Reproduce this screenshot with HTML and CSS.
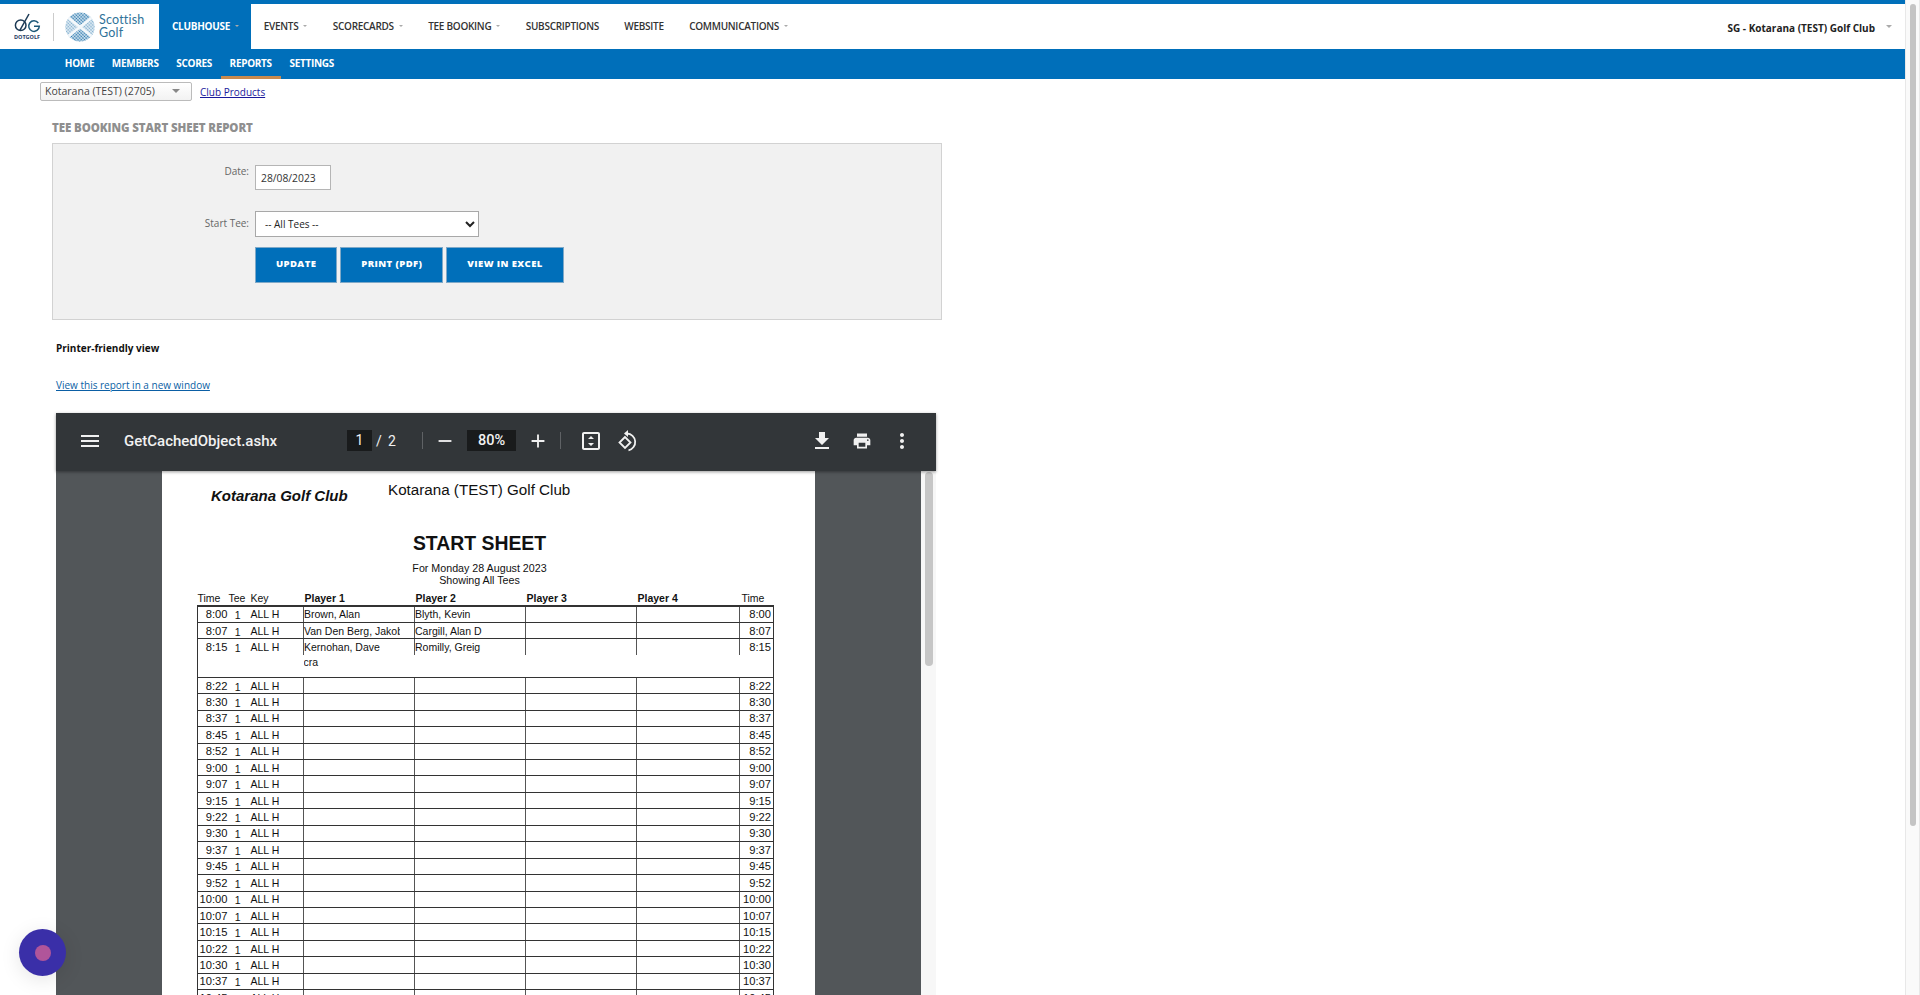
FILE: index.html
```html
<!DOCTYPE html>
<html lang="en">
<head>
    <meta charset="UTF-8">
    <title>Tee Booking Start Sheet Report</title>
    <link rel="stylesheet" href="styles.css">
</head>
<body>
<div class="window">
<div class="page">
    <!-- Main navigation -->
    <header class="topnav">
        <a class="logos" href="#">
            <span class="dotgolf">
                <svg width="28" height="22" viewBox="0 0 28 22" fill="none">
                    <circle cx="7.7" cy="13.3" r="5.3" stroke="#1c3a55" stroke-width="1.5"/>
                    <path d="M6.7 18.7 16 2" stroke="#1c3a55" stroke-width="1.5"/>
                    <path d="M25.3 11a5.3 5.3 0 1 0 1 3.3H21" stroke="#1c5878" stroke-width="1.5"/>
                </svg>
                <b>DOTGOLF</b>
            </span>
            <span class="logo-sep"></span>
            <svg class="globe" width="30" height="30" viewBox="0 0 30 30">
                <defs>
                    <pattern id="dots" width="2.3" height="2.3" patternUnits="userSpaceOnUse" patternTransform="rotate(45)">
                        <circle cx="1.15" cy="1.15" r="0.85" fill="#2273ab"/>
                    </pattern>
                    <clipPath id="ball"><circle cx="15" cy="15" r="14.5"/></clipPath>
                </defs>
                <g clip-path="url(#ball)">
                    <rect width="30" height="30" fill="#d5e4ef"/>
                    <rect width="30" height="30" fill="url(#dots)"/>
                    <path d="M0 0 15 15 0 30zM30 0 15 15 30 30z" fill="#fff" opacity="0.4"/>
                    <path d="M0 3 30 27M30 3 0 27" stroke="#f4f8fb" stroke-width="2.8"/>
                </g>
            </svg>
            <span class="scottish">Scottish<br>Golf</span>
        </a>
        <nav class="mainmenu">
            <a class="active caret" href="#">Clubhouse</a>
            <a class="caret" href="#">Events</a>
            <a class="caret" href="#">Scorecards</a>
            <a class="caret" href="#">Tee Booking</a>
            <a href="#">Subscriptions</a>
            <a href="#">Website</a>
            <a class="caret" href="#">Communications</a>
        </nav>
        <div class="clubname">SG - Kotarana (TEST) Golf Club</div>
    </header>

    <nav class="subnav">
        <a href="#">Home</a>
        <a href="#">Members</a>
        <a href="#">Scores</a>
        <a class="current" href="#">Reports</a>
        <a href="#">Settings</a>
    </nav>

    <div class="clubbar">
        <div class="clubselect">Kotarana (TEST) (2705)</div>
        <a href="#">Club Products</a>
    </div>

    <h1 class="report-title">Tee Booking Start Sheet Report</h1>

    <!-- Report filter -->
    <form class="filter">
        <label class="first" for="date">Date:</label>
        <input id="date" class="datebox" type="text" value="28/08/2023">
        <label for="tee">Start Tee:</label>
        <select id="tee" class="teebox"><option>-- All Tees --</option></select>
        <div class="buttons">
            <button type="button">Update</button>
            <button type="button">Print (PDF)</button>
            <button type="button">View in Excel</button>
        </div>
    </form>

    <p class="printer">Printer-friendly view</p>
    <a class="newwindow" href="#">View this report in a new window</a>

    <!-- PDF viewer -->
    <div class="viewer">
        <div class="pdfbar">
            <svg class="ico menu" viewBox="0 0 24 24"><path d="M3 18h18v-2H3v2zm0-5h18v-2H3v2zm0-7v2h18V6H3z"/></svg>
            <span class="pdfname">GetCachedObject.ashx</span>
            <span class="pagebox">1</span>
            <span class="pageof">/</span>
            <span class="pagetotal">2</span>
            <span class="pdfsep sep1"></span>
            <svg class="ico minus" viewBox="0 0 24 24"><path d="M19 13H5v-2h14v2z"/></svg>
            <span class="zoombox">80%</span>
            <svg class="ico plus" viewBox="0 0 24 24"><path d="M19 13h-6v6h-2v-6H5v-2h6V5h2v6h6v2z"/></svg>
            <span class="pdfsep sep2"></span>
            <svg class="ico fit" viewBox="0 0 24 24"><path d="M19 3H5c-1.1 0-2 .9-2 2v14c0 1.1.9 2 2 2h14c1.1 0 2-.9 2-2V5c0-1.1-.9-2-2-2zm0 16H5V5h14v14z"/><path d="M12 7l3 3H9zM12 17l-3-3h6z"/></svg>
            <svg class="ico rotate" viewBox="0 0 24 24"><path d="M10 8l-5.5 5.5L10 19l5.5-5.5z" stroke="#f1f1f1" stroke-width="1.8"/><path d="M12 4.5a8.5 8.5 0 0 1 1.5 16.8" stroke="#f1f1f1" stroke-width="1.8"/><path class="rot-head" d="M13 1 9 4.5 13 8z"/></svg>
            <svg class="ico download" viewBox="0 0 24 24"><path d="M19 9h-4V3H9v6H5l7 7 7-7zM5 18v2h14v-2H5z"/></svg>
            <svg class="ico print" viewBox="0 0 24 24"><path d="M19 8H5c-1.66 0-3 1.34-3 3v6h4v4h12v-4h4v-6c0-1.66-1.34-3-3-3zm-3 11H8v-5h8v5zm3-7c-.55 0-1-.45-1-1s.45-1 1-1 1 .45 1 1-.45 1-1 1zm-1-9H6v4h12V3z"/></svg>
            <svg class="ico more" viewBox="0 0 24 24"><path d="M12 8c1.1 0 2-.9 2-2s-.9-2-2-2-2 .9-2 2 .9 2 2 2zm0 2c-1.1 0-2 .9-2 2s.9 2 2 2 2-.9 2-2-.9-2-2-2zm0 6c-1.1 0-2 .9-2 2s.9 2 2 2 2-.9 2-2-.9-2-2-2z"/></svg>
        </div>
        <div class="pdfbody">
            <div class="pdfscroll">
                <div class="sheet">
                    <div class="sheet-head">
                        <span class="sheet-logo">Kotarana Golf Club</span>
                        <span class="sheet-club">Kotarana (TEST) Golf Club</span>
                    </div>
                    <h2 class="sheet-title">START SHEET</h2>
                    <p class="sheet-sub">For Monday 28 August 2023<br>Showing All Tees</p>
                    <table class="starts">
                        <colgroup>
                            <col class="c-time"><col class="c-tee"><col class="c-key">
                            <col class="c-p"><col class="c-p"><col class="c-p"><col class="c-p4"><col class="c-end">
                        </colgroup>
                        <thead>
                            <tr><th class="h-time">Time</th><th class="h-tee">Tee</th><th class="h-key">Key</th><th class="pl">Player 1</th><th class="pl">Player 2</th><th class="pl">Player 3</th><th class="pl">Player 4</th><th class="h-end">Time</th></tr>
                        </thead>
                        <tbody>
                            <tr><td>8:00</td><td class="t">1</td><td class="k">ALL H</td><td class="v">Brown, Alan</td><td class="v">Blyth, Kevin</td><td class="v"></td><td class="v"></td><td class="e">8:00</td></tr>
                            <tr><td>8:07</td><td class="t">1</td><td class="k">ALL H</td><td class="v"><span class="clip">Van Den Berg, Jakob</span></td><td class="v">Cargill, Alan D</td><td class="v"></td><td class="v"></td><td class="e">8:07</td></tr>
                            <tr class="nobottom"><td>8:15</td><td class="t">1</td><td class="k">ALL H</td><td class="v">Kernohan, Dave</td><td class="v">Romilly, Greig</td><td class="v"></td><td class="v"></td><td class="e">8:15</td></tr>
                            <tr class="extra"><td colspan="3"></td><td colspan="5">cra</td></tr>
                            <tr><td>8:22</td><td class="t">1</td><td class="k">ALL H</td><td class="v"></td><td class="v"></td><td class="v"></td><td class="v"></td><td class="e">8:22</td></tr>
                            <tr><td>8:30</td><td class="t">1</td><td class="k">ALL H</td><td class="v"></td><td class="v"></td><td class="v"></td><td class="v"></td><td class="e">8:30</td></tr>
                            <tr><td>8:37</td><td class="t">1</td><td class="k">ALL H</td><td class="v"></td><td class="v"></td><td class="v"></td><td class="v"></td><td class="e">8:37</td></tr>
                            <tr><td>8:45</td><td class="t">1</td><td class="k">ALL H</td><td class="v"></td><td class="v"></td><td class="v"></td><td class="v"></td><td class="e">8:45</td></tr>
                            <tr><td>8:52</td><td class="t">1</td><td class="k">ALL H</td><td class="v"></td><td class="v"></td><td class="v"></td><td class="v"></td><td class="e">8:52</td></tr>
                            <tr><td>9:00</td><td class="t">1</td><td class="k">ALL H</td><td class="v"></td><td class="v"></td><td class="v"></td><td class="v"></td><td class="e">9:00</td></tr>
                            <tr><td>9:07</td><td class="t">1</td><td class="k">ALL H</td><td class="v"></td><td class="v"></td><td class="v"></td><td class="v"></td><td class="e">9:07</td></tr>
                            <tr><td>9:15</td><td class="t">1</td><td class="k">ALL H</td><td class="v"></td><td class="v"></td><td class="v"></td><td class="v"></td><td class="e">9:15</td></tr>
                            <tr><td>9:22</td><td class="t">1</td><td class="k">ALL H</td><td class="v"></td><td class="v"></td><td class="v"></td><td class="v"></td><td class="e">9:22</td></tr>
                            <tr><td>9:30</td><td class="t">1</td><td class="k">ALL H</td><td class="v"></td><td class="v"></td><td class="v"></td><td class="v"></td><td class="e">9:30</td></tr>
                            <tr><td>9:37</td><td class="t">1</td><td class="k">ALL H</td><td class="v"></td><td class="v"></td><td class="v"></td><td class="v"></td><td class="e">9:37</td></tr>
                            <tr><td>9:45</td><td class="t">1</td><td class="k">ALL H</td><td class="v"></td><td class="v"></td><td class="v"></td><td class="v"></td><td class="e">9:45</td></tr>
                            <tr><td>9:52</td><td class="t">1</td><td class="k">ALL H</td><td class="v"></td><td class="v"></td><td class="v"></td><td class="v"></td><td class="e">9:52</td></tr>
                            <tr><td>10:00</td><td class="t">1</td><td class="k">ALL H</td><td class="v"></td><td class="v"></td><td class="v"></td><td class="v"></td><td class="e">10:00</td></tr>
                            <tr><td>10:07</td><td class="t">1</td><td class="k">ALL H</td><td class="v"></td><td class="v"></td><td class="v"></td><td class="v"></td><td class="e">10:07</td></tr>
                            <tr><td>10:15</td><td class="t">1</td><td class="k">ALL H</td><td class="v"></td><td class="v"></td><td class="v"></td><td class="v"></td><td class="e">10:15</td></tr>
                            <tr><td>10:22</td><td class="t">1</td><td class="k">ALL H</td><td class="v"></td><td class="v"></td><td class="v"></td><td class="v"></td><td class="e">10:22</td></tr>
                            <tr><td>10:30</td><td class="t">1</td><td class="k">ALL H</td><td class="v"></td><td class="v"></td><td class="v"></td><td class="v"></td><td class="e">10:30</td></tr>
                            <tr><td>10:37</td><td class="t">1</td><td class="k">ALL H</td><td class="v"></td><td class="v"></td><td class="v"></td><td class="v"></td><td class="e">10:37</td></tr>
                            <tr><td>10:45</td><td class="t">1</td><td class="k">ALL H</td><td class="v"></td><td class="v"></td><td class="v"></td><td class="v"></td><td class="e">10:45</td></tr>
                        </tbody>
                    </table>
                </div>
            </div>
            <div class="pdftrack"><div class="pdfthumb"></div></div>
        </div>
    </div>
</div>

<div class="scrollbar"><div class="thumb"></div></div>
</div>

<!-- Chat bubble -->
<div class="chat"><span></span></div>
</body>
</html>
```

FILE: styles.css
```css
/* Base */
* {
    box-sizing: border-box;
}

html, body {
    margin: 0;
    height: 100%;
    overflow: hidden;
}

body {
    font-family: "Open Sans", Arial, sans-serif;
    font-size: 11px;
    color: #333;
    background-color: #fff;
}

a {
    text-decoration: none;
}

.window {
    display: flex;
    height: 995px;
}

.page {
    width: 1905px;
    height: 995px;
    overflow: hidden;
}

/* Window scrollbar */
.scrollbar {
    width: 15px;
    padding: 4px 3px 0 4px;
    background-color: #fafafa;
    border-left: 1px solid #e8e8e8;
    border-right: 1px solid #e8e8e8;
}

.thumb {
    height: 822px;
    border-radius: 4px;
    background-color: #c4c4c4;
}

/* Main navigation */
.topnav {
    display: flex;
    height: 49px;
    border-top: 4px solid #006fba;
    background-color: #fff;
}

.logos {
    display: flex;
    align-items: center;
    width: 159px;
    padding-left: 14px;
}

.dotgolf {
    display: flex;
    flex-direction: column;
    align-items: center;
    width: 26px;
}

.dotgolf b {
    font-size: 5.5px;
    line-height: 7px;
    color: #1e3a5f;
}

.logo-sep {
    width: 1px;
    height: 28px;
    margin: 0 11px 0 13px;
    background-color: #ccc;
}

.scottish {
    margin-left: 4px;
    font-family: Lato, sans-serif;
    font-size: 12.5px;
    line-height: 12.5px;
    letter-spacing: 0.2px;
    color: #2f7299;
}

.mainmenu {
    display: flex;
}

.mainmenu a {
    display: flex;
    align-items: center;
    padding: 0 12.7px 1px;
    font-size: 10px;
    letter-spacing: -0.28px;
    font-weight: 600;
    text-transform: uppercase;
    color: #333;
}

.mainmenu a.caret::after {
    content: "";
    margin-left: 5px;
    border-left: 2px solid transparent;
    border-right: 2px solid transparent;
    border-top: 2px solid #aaa;
}

.mainmenu a.active {
    width: 92px;
    padding-left: 13px;
    color: #fff;
    font-weight: 700;
    background-color: #006fba;
}

.clubname {
    margin-left: auto;
    padding: 3px 30px 0 0;
    align-self: center;
    position: relative;
    font-size: 10px;
    font-weight: 700;
    color: #222;
}

.clubname::after {
    content: "";
    position: absolute;
    top: 7px;
    right: 13px;
    border-left: 3px solid transparent;
    border-right: 3px solid transparent;
    border-top: 3px solid #aaa;
}

.subnav {
    display: flex;
    height: 30px;
    padding-left: 56px;
    background-color: #006fba;
}

.subnav a {
    display: flex;
    align-items: center;
    padding: 0 8.8px;
    font-size: 10px;
    letter-spacing: -0.3px;
    font-weight: 700;
    text-transform: uppercase;
    color: #fff;
    border-bottom: 3px solid transparent;
}

.subnav a.current {
    border-bottom-color: #c98a4e;
}

/* Club selector */
.clubbar {
    display: flex;
    align-items: center;
    gap: 8px;
    margin: 3px 0 0 40px;
}

.clubselect {
    position: relative;
    width: 152px;
    height: 19px;
    padding-left: 4px;
    line-height: 16px;
    font-size: 10.5px;
    color: #444;
    border: 1px solid #bbb;
    border-radius: 2px;
    background: linear-gradient(#fff, #f2f2f2);
}

.clubselect::after {
    content: "";
    position: absolute;
    top: 6px;
    right: 11px;
    border-left: 4px solid transparent;
    border-right: 4px solid transparent;
    border-top: 4px solid #888;
}

.clubbar a {
    padding-top: 1px;
    font-size: 10px;
    color: #1a1a9c;
    text-decoration: underline;
}

/* Report */
.report-title {
    margin: 19px 0 0 52px;
    font-size: 11.5px;
    line-height: 16px;
    font-weight: 800;
    letter-spacing: -0.1px;
    text-transform: uppercase;
    color: #8f8f8f;
}

.filter {
    display: grid;
    grid-template-columns: 196px 1fr;
    grid-template-rows: 25px 26px 36px;
    column-gap: 6px;
    row-gap: 21px;
    width: 890px;
    height: 177px;
    margin: 7px 0 0 52px;
    padding-top: 21px;
    background-color: #f1f1f1;
    border: 1px solid #d2d2d2;
}

.filter label {
    padding-top: 5px;
    text-align: right;
    font-size: 10px;
    color: #666;
}

.filter label.first {
    padding-top: 0;
    margin-top: -1px;
}

.datebox {
    width: 76px;
    height: 25px;
    padding: 0 5px;
    font-family: inherit;
    font-size: 10.3px;
    color: #333;
    background-color: #fff;
    border: 1px solid #b5b5b5;
}

.teebox {
    width: 224px;
    height: 26px;
    padding-left: 5px;
    font-family: inherit;
    font-size: 10px;
    color: #222;
    background-color: #fff;
    border: 1px solid #a8a8a8;
}

.buttons {
    grid-column: 2;
    display: flex;
    gap: 3px;
    margin-top: -11px;
}

.buttons button {
    height: 36px;
    padding: 0 20px 3px;
    font-family: inherit;
    font-size: 9.5px;
    font-weight: 800;
    letter-spacing: 0.4px;
    text-transform: uppercase;
    color: #fff;
    background-color: #006fba;
    border: 1px solid #7fa9c8;
}

.printer {
    margin: 20px 0 0 56px;
    font-size: 10px;
    line-height: 16px;
    font-weight: 700;
    color: #111;
}

.newwindow {
    display: block;
    margin: 21px 0 0 56px;
    font-size: 10px;
    line-height: 16px;
    color: #0b5fa5;
    text-decoration: underline;
}

/* PDF viewer */
.viewer {
    width: 880px;
    margin: 20px 0 0 56px;
    background-color: #525659;
}

.pdfbar {
    position: relative;
    height: 58px;
    font-family: Roboto, Arial, sans-serif;
    color: #f1f1f1;
    background-color: #323639;
    box-shadow: 0 1px 3px rgba(0, 0, 0, 0.4);
}

/* toolbar controls sit at fixed places, like the real viewer */
.pdfbar > * {
    position: absolute;
}

.ico {
    top: 16px;
    width: 24px;
    height: 24px;
    fill: #f1f1f1;
}

.menu { left: 22px; }
.minus { left: 378px; top: 17px; width: 22px; height: 22px; }
.plus { left: 471px; top: 17px; width: 22px; height: 22px; }
.fit { left: 523px; }
.rotate { left: 559px; fill: none; }
.rot-head { fill: #f1f1f1; }
.download { left: 754px; }
.print { left: 796px; top: 18px; width: 20px; height: 20px; }
.more { left: 834px; }

.pdfname {
    top: 19px;
    left: 68px;
    font-size: 15px;
    line-height: 18px;
    font-weight: 500;
}

.pagebox {
    top: 17px;
    left: 291px;
    width: 25px;
    height: 21px;
    font-size: 14px;
    line-height: 21px;
    text-align: center;
    background-color: #191b1c;
}

.pageof {
    top: 18px;
    left: 320px;
    font-size: 14px;
    line-height: 21px;
}

.pagetotal {
    top: 18px;
    left: 332px;
    font-size: 14px;
    line-height: 21px;
}

.pdfsep {
    top: 19px;
    width: 1px;
    height: 17px;
    background-color: #5f6265;
}

.sep1 { left: 366px; }
.sep2 { left: 504px; }

.zoombox {
    top: 17px;
    left: 411px;
    width: 49px;
    height: 21px;
    font-size: 14.5px;
    font-weight: 500;
    line-height: 21px;
    text-align: center;
    background-color: #191b1c;
}

.pdfbody {
    display: flex;
    height: 524px;
}

.pdfscroll {
    width: 865px;
    padding-left: 106px;
    overflow: hidden;
}

.pdftrack {
    width: 15px;
    padding: 1px 3px 0 4px;
    background-color: #f7f7f7;
}

.pdfthumb {
    height: 194px;
    border-radius: 4px;
    background-color: #c6c6c6;
}

/* PDF page */
.sheet {
    width: 653px;
    height: 540px;
    padding: 0 35px;
    font-family: "Liberation Sans", Arial, sans-serif;
    color: #111;
    background-color: #fff;
}

.sheet-head {
    display: flex;
    height: 54px;
}

.sheet-logo {
    margin: 16px 0 0 14px;
    width: 177px;
    font-size: 15px;
    font-weight: 700;
    font-style: italic;
}

.sheet-club {
    margin-top: 10px;
    font-size: 15.2px;
    line-height: 18px;
}

.sheet-title {
    margin: 6px 18px 0 0;
    text-align: center;
    font-size: 19.4px;
    line-height: 24px;
}

.sheet-sub {
    margin: 8px 18px 0 0;
    text-align: center;
    font-size: 10.7px;
    line-height: 11.5px;
}

.starts {
    width: 576px;
    margin-top: 5px;
    table-layout: fixed;
    border-collapse: collapse;
    font-size: 10.5px;
}

.c-time { width: 36px; }
.c-tee { width: 15px; }
.c-key { width: 55px; }
.c-p { width: 111px; }
.c-p4 { width: 103px; }
.c-end { width: 34px; }

.starts th {
    height: 15px;
    padding: 0;
    font-weight: 400;
    text-align: left;
    white-space: nowrap;
    border-bottom: 2px solid #333;
}

.starts th.pl {
    padding-left: 1px;
    font-weight: 700;
}

.h-time { padding-left: 0 !important; }
.h-tee { padding-left: 0 !important; position: relative; left: -5px; }
.h-key { padding-left: 2px !important; }
.h-end { padding-left: 2px !important; }

.starts tbody tr {
    height: 16.45px;
}

.starts td {
    padding: 0 6px 0 0;
    font-size: 11.2px;
    text-align: right;
    white-space: nowrap;
    overflow: hidden;
    border-bottom: 1px solid #333;
}

.starts td:first-child {
    border-left: 1px solid #333;
}

.starts td:last-child {
    border-right: 1px solid #333;
}

.starts td.t {
    padding: 2px 8px 0 0;
    font-size: 10.5px;
}

.starts td.k {
    padding: 0 0 0 2px;
    font-size: 10.5px;
    text-align: left;
}

.starts td.v {
    padding: 0;
    font-size: 10.5px;
    text-align: left;
    border-left: 1px solid #555;
}

.starts td.e {
    padding-right: 2px;
    border-left: 1px solid #555;
}

.clip {
    display: block;
    width: 96px;
    overflow: hidden;
}

.starts tr.nobottom td {
    border-bottom: none;
}

.starts tr.extra {
    height: 22px;
}

.starts tr.extra td {
    padding: 0 0 9px 0;
    font-size: 10.5px;
    text-align: left;
}

.starts tr.extra td:first-child {
    border-right: none;
}

/* Chat bubble */
.chat {
    position: absolute;
    left: 19px;
    top: 929px;
    display: flex;
    align-items: center;
    justify-content: center;
    width: 47px;
    height: 47px;
    border-radius: 50%;
    background-color: #3a2fa8;
    box-shadow: 0 4px 20px rgba(0, 0, 0, 0.1);
}

.chat span {
    width: 16px;
    height: 16px;
    border-radius: 50%;
    background-color: #b0559a;
}
```
